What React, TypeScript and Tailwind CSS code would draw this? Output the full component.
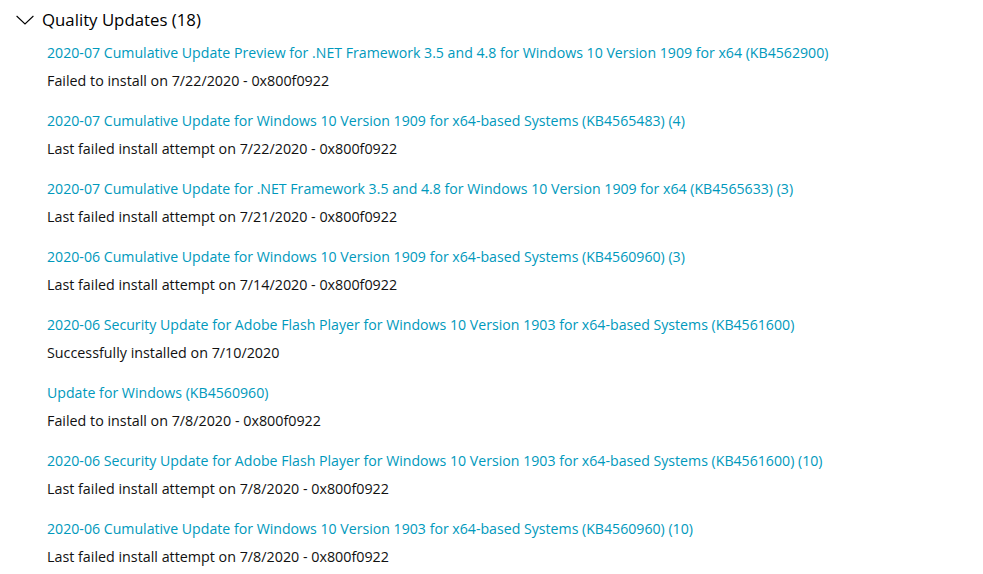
import React from "react";

const updates = [
  {
    title: "2020-07 Cumulative Update Preview for .NET Framework 3.5 and 4.8 for Windows 10 Version 1909 for x64 (KB4562900)",
    status: "Failed to install on 7/22/2020 - 0x800f0922",
  },
  {
    title: "2020-07 Cumulative Update for Windows 10 Version 1909 for x64-based Systems (KB4565483) (4)",
    status: "Last failed install attempt on 7/22/2020 - 0x800f0922",
  },
  {
    title: "2020-07 Cumulative Update for .NET Framework 3.5 and 4.8 for Windows 10 Version 1909 for x64 (KB4565633) (3)",
    status: "Last failed install attempt on 7/21/2020 - 0x800f0922",
  },
  {
    title: "2020-06 Cumulative Update for Windows 10 Version 1909 for x64-based Systems (KB4560960) (3)",
    status: "Last failed install attempt on 7/14/2020 - 0x800f0922",
  },
  {
    title: "2020-06 Security Update for Adobe Flash Player for Windows 10 Version 1903 for x64-based Systems (KB4561600)",
    status: "Successfully installed on 7/10/2020",
  },
  {
    title: "Update for Windows (KB4560960)",
    status: "Failed to install on 7/8/2020 - 0x800f0922",
  },
  {
    title: "2020-06 Security Update for Adobe Flash Player for Windows 10 Version 1903 for x64-based Systems (KB4561600) (10)",
    status: "Last failed install attempt on 7/8/2020 - 0x800f0922",
  },
  {
    title: "2020-06 Cumulative Update for Windows 10 Version 1903 for x64-based Systems (KB4560960) (10)",
    status: "Last failed install attempt on 7/8/2020 - 0x800f0922",
  },
];

function Chevron() {
  return (
    <svg width="18" height="10" viewBox="0 0 18 10" className="shrink-0">
      <path d="M0.6 1 L9 9 L17.4 1" fill="none" stroke="#000" strokeWidth="1.1" />
    </svg>
  );
}

export default function App() {
  return (
    <div
      className="w-[983px] h-[574px] overflow-hidden bg-white text-black"
      style={{ fontFamily: '"Segoe UI", "Open Sans", sans-serif' }}
    >
      <div className="flex items-center gap-[8px] pl-[16px] pt-[6px] h-[33px]">
        <Chevron />
        <span className="text-[16.8px] leading-[26px]">Quality Updates (18)</span>
      </div>
      <ul className="pl-[47px] pt-[10px] flex flex-col gap-[20px]">
        {updates.map((u) => (
          <li key={u.title} className="flex flex-col gap-[8px] leading-[20px]">
            <a className="text-[14.15px] text-[#0099bc] whitespace-nowrap cursor-pointer">{u.title}</a>
            <span className="text-[14.3px] text-[#111] whitespace-nowrap">{u.status}</span>
          </li>
        ))}
      </ul>
    </div>
  );
}
